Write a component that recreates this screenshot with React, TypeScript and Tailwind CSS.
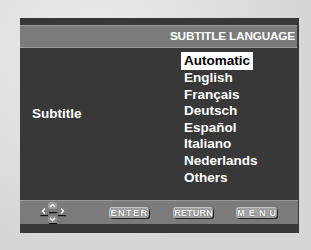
const languages = ['English', 'Français', 'Deutsch', 'Español', 'Italiano', 'Nederlands', 'Others'];

const NavKeys = () => (
    <svg width="30" height="22" viewBox="0 0 30 22" className="block">
        <rect x="9" y="0" width="9" height="7" rx="2" fill="#9a9a9a" />
        <rect x="9" y="14" width="9" height="7" rx="2" fill="#8e8e8e" />
        <path d="M11 5 L13.5 2.5 L16 5" stroke="#fff" strokeWidth="1.3" fill="none" />
        <path d="M11 16 L13.5 18.5 L16 16" stroke="#fff" strokeWidth="1.3" fill="none" />
        <path d="M6 6.5 L3.5 9 L6 11.5" stroke="#fff" strokeWidth="1.3" fill="none" />
        <path d="M22 6.5 L24.5 9 L22 11.5" stroke="#fff" strokeWidth="1.3" fill="none" />
        <rect x="10" y="10" width="8" height="1.2" fill="#111" />
        <rect x="1.5" y="13" width="7.5" height="1.2" fill="#111" />
        <rect x="19" y="13" width="8" height="1.2" fill="#111" />
        <rect x="10" y="21" width="8" height="1.2" fill="#111" />
    </svg>
);

const Key = ({ label, width, tracking }: { label: string; width: string; tracking: string }) => (
    <div
        className={`${width} h-[11px] rounded-[3px] bg-[#a3a3a3] border-t border-l border-[#c4c4c4] shadow-[1px_1px_0_#222] flex items-center justify-center text-[9px] font-bold leading-none text-white ${tracking} [text-shadow:0_0_1px_#222]`}
    >
        {label}
    </div>
);

const App = () => {
    return (
        <div
            className="w-[311px] h-[250px] pt-[18px] pl-[20px] bg-[radial-gradient(ellipse_at_30%_20%,#ececec,#d6d6d6_70%)]"
            style={{ fontFamily: '"Liberation Sans", Arial, sans-serif' }}
        >
            <div className="w-[279px] h-[215px] bg-[#383838] flex flex-col">
                <div className="h-[7px]" />

                <div className="h-[23px] mr-[2px] bg-[#7b7b7b] border-t border-b border-[#9b9b9b] flex items-center justify-end pr-[2px]">
                    <span className="text-[11.8px] font-bold text-white leading-none tracking-[-0.2px]">
                        SUBTITLE LANGUAGE
                    </span>
                </div>

                <div className="h-[152px] flex">
                    <div className="w-[161px] pl-[12px] pt-[57px] text-[13.5px] leading-[17px] font-bold text-white">
                        Subtitle
                    </div>

                    <div className="pt-[4px] flex flex-col items-start text-[13.5px] font-bold">
                        <div className="h-[18px] px-[3px] bg-white text-black leading-[18px]">Automatic</div>
                        {languages.map((lang) => (
                            <div key={lang} className="pl-[3px] text-white leading-[16.6px]">
                                {lang}
                            </div>
                        ))}
                    </div>
                </div>

                <div className="h-[24px] mr-[1px] bg-[#7b7b7b] border-t border-[#999] flex items-center pl-[19px]">
                    <NavKeys />
                    <div className="ml-[40px]">
                        <Key label="ENTER" width="w-[40px]" tracking="tracking-[1.5px]" />
                    </div>
                    <div className="ml-[24px]">
                        <Key label="RETURN" width="w-[40px]" tracking="tracking-[0.2px]" />
                    </div>
                    <div className="ml-[23px]">
                        <Key label="M E N U" width="w-[41px]" tracking="tracking-[0.8px]" />
                    </div>
                </div>
            </div>
        </div>
    );
};

export default App;
